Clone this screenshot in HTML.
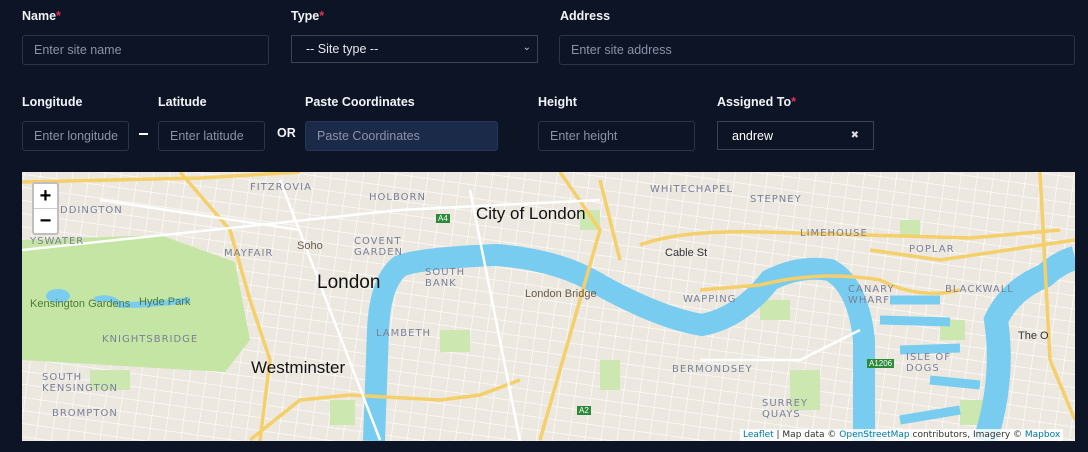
<!DOCTYPE html>
<html><head><meta charset="utf-8"><style>
*{box-sizing:border-box;margin:0;padding:0}
body{width:1088px;height:452px;background:#0c1426;font-family:"Liberation Sans",sans-serif;position:relative;overflow:hidden;color:#fff}
.l{position:absolute;font-size:12.5px;font-weight:bold;color:#f2f4f8}
.l b{color:#e8304f;font-weight:bold}
.i{position:absolute;border:1px solid #2b3446;border-radius:3px;font-size:12.5px;color:#8a93a6;padding-left:11px;display:flex;align-items:center;height:30px}
.map{position:absolute;left:22px;top:172px;width:1053px;height:269px;background:#ece8e0;overflow:hidden}
</style></head><body>
<div class="l" style="left:22px;top:9px">Name<b>*</b></div>
<div class="l" style="left:291px;top:9px">Type<b>*</b></div>
<div class="l" style="left:560px;top:9px">Address</div>
<div class="i" style="left:22px;top:35px;width:247px">Enter site name</div>
<div class="i" style="left:291px;top:35px;width:247px;height:28px;border-radius:0;border-color:#3a4255;color:#e6e8ee;padding-left:14px">-- Site type --<span style="position:absolute;right:6px;top:6px;font-size:10px;color:#ccc">&#8964;</span></div>
<div class="i" style="left:559px;top:35px;width:516px">Enter site address</div>
<div class="l" style="left:22px;top:95px">Longitude</div>
<div class="l" style="left:158px;top:95px">Latitude</div>
<div class="l" style="left:305px;top:95px">Paste Coordinates</div>
<div class="l" style="left:538px;top:95px">Height</div>
<div class="l" style="left:717px;top:95px">Assigned To<b>*</b></div>
<div class="i" style="left:22px;top:121px;width:107px;overflow:hidden;white-space:nowrap">Enter longitude</div>
<div style="position:absolute;left:139px;top:133px;width:9px;height:2px;background:#fff"></div>
<div class="i" style="left:158px;top:121px;width:107px">Enter latitude</div>
<div class="l" style="left:277px;top:126px">OR</div>
<div class="i" style="left:305px;top:121px;width:193px;background:#1c2a4a;border-color:#24345a">Paste Coordinates</div>
<div class="i" style="left:538px;top:121px;width:157px">Enter height</div>
<div class="i" style="left:717px;top:121px;width:157px;height:29px;border-radius:0;border-color:#3a4255;color:#fff;padding-left:14px">andrew<span style="position:absolute;right:14px;font-size:10px;color:#ddd">✖</span></div>

<div class="map">
<svg width="1053" height="269" viewBox="22 172 1053 269" style="position:absolute;left:0;top:0">
<defs><pattern id="g" width="16" height="13" patternUnits="userSpaceOnUse" patternTransform="rotate(8)"><path d="M0 0H16M0 0V13" stroke="#fff" stroke-width="1.2" fill="none"/></pattern></defs>
<rect x="22" y="172" width="1053" height="269" fill="url(#g)"/>
<path d="M22 240 L160 235 L235 262 L250 340 L225 372 L22 360Z" fill="#c5e5a4"/>
<g fill="#cde7b0">
<rect x="440" y="330" width="30" height="22"/><rect x="600" y="360" width="20" height="30"/><rect x="760" y="300" width="30" height="20"/><rect x="790" y="370" width="30" height="40"/><rect x="940" y="320" width="25" height="20"/><rect x="960" y="400" width="30" height="25"/><rect x="330" y="400" width="25" height="25"/><rect x="580" y="210" width="20" height="20"/><rect x="90" y="370" width="40" height="20"/><rect x="900" y="220" width="20" height="15"/></g>
<path d="M95 300 Q110 295 120 305 Q150 305 190 300" stroke="#7acdee" stroke-width="6" fill="none"/>
<ellipse cx="58" cy="296" rx="12" ry="7" fill="#7acdee"/>
<path d="M374 441 L378 330 Q380 282 400 266 Q420 258 497 255 Q560 260 600 285 Q660 318 702 325 Q740 318 770 280 Q800 265 830 270 Q858 285 864 340 L864 441" stroke="#78ccf0" stroke-width="22" fill="none"/>
<path d="M985 441 Q1005 380 996 320 Q1010 290 1044 276 Q1060 262 1075 258" stroke="#78ccf0" stroke-width="24" fill="none"/>
<path d="M880 320 L950 322 M900 350 L960 348 M890 300 L940 300 M930 380 L980 385 M900 420 L960 410" stroke="#78ccf0" stroke-width="9"/>
<path d="M640 245 Q680 230 760 232 L970 238 L1060 230 M600 180 L620 260 M560 172 L600 230 L540 440 M250 440 L300 400 L350 395 L440 400 L480 395 L520 380 M180 172 L230 230 L250 300 L270 360 L260 441 M870 250 L940 260 L1075 240 M1040 172 L1050 360 L1075 420 M700 290 L760 285 Q820 270 880 280 Q920 300 960 290 M22 182 L200 178 L300 172" stroke="#f4cf6a" stroke-width="3.5" fill="none"/>
<path d="M22 250 L400 210 L600 200 M280 180 L380 440 M470 190 L520 441 M700 360 L800 360 L860 330 M100 200 L300 230" stroke="#fff" stroke-width="2.5" fill="none"/>
</svg>
<div style="position:absolute;left:10px;top:10px;width:27px;height:53px;background:#fff;border:2px solid rgba(0,0,0,.25);border-radius:3px;color:#000;font-size:20px;text-align:center;line-height:24px;font-weight:bold">+<div style="border-top:1px solid #ccc">−</div></div>
<div style="position:absolute;inset:0;font-family:'DejaVu Sans',sans-serif;color:#7a7f98;font-size:10px;letter-spacing:1px">
<span style="position:absolute;left:228px;top:10px">FITZROVIA</span>
<span style="position:absolute;left:347px;top:20px">HOLBORN</span>
<span style="position:absolute;left:38px;top:33px">DDINGTON</span>
<span style="position:absolute;left:8px;top:64px">YSWATER</span>
<span style="position:absolute;left:202px;top:76px">MAYFAIR</span>
<span style="position:absolute;left:332px;top:64px">COVENT<br>GARDEN</span>
<span style="position:absolute;left:403px;top:95px">SOUTH<br>BANK</span>
<span style="position:absolute;left:354px;top:156px">LAMBETH</span>
<span style="position:absolute;left:80px;top:162px">KNIGHTSBRIDGE</span>
<span style="position:absolute;left:20px;top:200px">SOUTH<br>KENSINGTON</span>
<span style="position:absolute;left:30px;top:236px">BROMPTON</span>
<span style="position:absolute;left:628px;top:12px">WHITECHAPEL</span>
<span style="position:absolute;left:728px;top:22px">STEPNEY</span>
<span style="position:absolute;left:778px;top:56px">LIMEHOUSE</span>
<span style="position:absolute;left:887px;top:72px">POPLAR</span>
<span style="position:absolute;left:923px;top:112px">BLACKWALL</span>
<span style="position:absolute;left:826px;top:112px">CANARY<br>WHARF</span>
<span style="position:absolute;left:661px;top:122px">WAPPING</span>
<span style="position:absolute;left:650px;top:192px">BERMONDSEY</span>
<span style="position:absolute;left:740px;top:226px">SURREY<br>QUAYS</span>
<span style="position:absolute;left:884px;top:180px">ISLE OF<br>DOGS</span>
</div>
<span style="position:absolute;left:295px;top:100px;font-size:19px;color:#111">London</span>
<span style="position:absolute;left:454px;top:32px;font-size:17px;color:#111">City of London</span>
<span style="position:absolute;left:229px;top:186px;font-size:17px;color:#111">Westminster</span>
<span style="position:absolute;left:275px;top:68px;font-size:11px;color:#6b5a4a">Soho</span>
<span style="position:absolute;left:503px;top:116px;font-size:11px;color:#6b5a4a">London Bridge</span>
<span style="position:absolute;left:643px;top:75px;font-size:11px;color:#333">Cable St</span>
<span style="position:absolute;left:8px;top:126px;font-size:11px;color:#4f7a3a">Kensington Gardens</span>
<span style="position:absolute;left:117px;top:124px;font-size:11px;color:#4f7a3a">Hyde Park</span>
<span style="position:absolute;left:996px;top:158px;font-size:11px;color:#333">The O</span>
<span style="position:absolute;left:414px;top:42px;font-size:8px;background:#2c8a3a;color:#fff;padding:0 2px">A4</span>
<span style="position:absolute;left:845px;top:187px;font-size:8px;background:#2c8a3a;color:#fff;padding:0 2px">A1206</span>
<span style="position:absolute;left:555px;top:234px;font-size:8px;background:#2c8a3a;color:#fff;padding:0 2px">A2</span>
<span style="position:absolute;left:718px;top:257px;background:rgba(255,255,255,.8);color:#333;padding:0 3px;height:12px;line-height:12px;font-family:'DejaVu Sans',sans-serif;font-size:9px"><span style="color:#0078a8">Leaflet</span> | Map data © <span style="color:#0078a8">OpenStreetMap</span> contributors, Imagery © <span style="color:#0078a8">Mapbox</span></span>
</div>
</body></html>
